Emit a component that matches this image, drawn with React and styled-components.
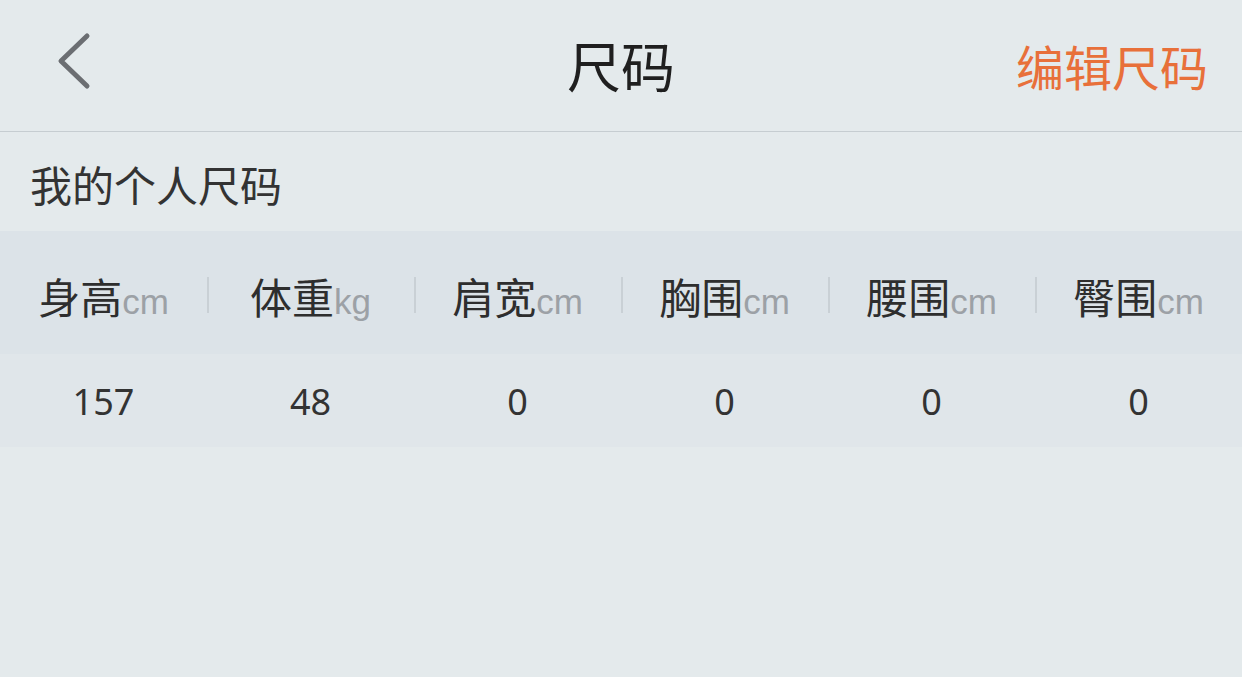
import React from "react";
import styled, { createGlobalStyle } from "styled-components";

const GlobalStyle = createGlobalStyle`
  html, body {
    margin: 0;
    padding: 0;
    background: #e4eaec;
    font-family: "Noto Sans CJK SC", "Noto Sans", sans-serif;
  }
`;

const sizes = [
  { name: "身高", unit: "cm", value: "157" },
  { name: "体重", unit: "kg", value: "48" },
  { name: "肩宽", unit: "cm", value: "0" },
  { name: "胸围", unit: "cm", value: "0" },
  { name: "腰围", unit: "cm", value: "0" },
  { name: "臀围", unit: "cm", value: "0" },
];

const BackIcon = () => (
  <svg width="40" height="64" viewBox="0 0 40 64">
    <polyline
      points="30,5 4,30 30,55"
      fill="none"
      stroke="#6b6e72"
      strokeWidth="5"
      strokeLinecap="round"
      strokeLinejoin="round"
    />
  </svg>
);

const App = () => {
  return (
    <Page>
      <GlobalStyle />
      <NavBar>
        <BackButton>
          <BackIcon />
        </BackButton>
        <Title>尺码</Title>
        <EditLink>编辑尺码</EditLink>
      </NavBar>
      <SectionTitle>我的个人尺码</SectionTitle>
      <Table>
        <HeadRow>
          {sizes.map((s, i) => (
            <HeadCell key={s.name} divider={i > 0}>
              <Label>{s.name}</Label>
              <Unit>{s.unit}</Unit>
            </HeadCell>
          ))}
        </HeadRow>
        <ValueRow>
          {sizes.map((s) => (
            <ValueCell key={s.name}>{s.value}</ValueCell>
          ))}
        </ValueRow>
      </Table>
    </Page>
  );
};

export default App;

const Page = styled.div`
  width: 1242px;
  height: 677px;
  background: #e4eaec;
  overflow: hidden;
`;

const NavBar = styled.div`
  height: 131px;
  border-bottom: 1px solid #c6cdd1;
  display: grid;
  grid-template-columns: 1fr auto 1fr;
  align-items: center;
  padding: 0 34px;
`;

const BackButton = styled.div`
  display: flex;
  align-items: center;
  margin-top: -6px;
  padding-left: 23px;
`;

const Title = styled.div`
  font-size: 54px;
  color: #1f1f1f;
  line-height: 1;
  margin-top: -2px;
`;

const EditLink = styled.div`
  justify-self: end;
  font-size: 48px;
  color: #e8703a;
  line-height: 1;
  margin-top: -2px;
`;

const SectionTitle = styled.div`
  height: 99px;
  display: flex;
  align-items: center;
  padding-left: 30px;
  font-size: 42px;
  color: #333;
  padding-top: 4px;
  box-sizing: border-box;
`;

const Table = styled.div`
  display: flex;
  flex-direction: column;
`;

const HeadRow = styled.div`
  height: 123px;
  background: #dce3e8;
  display: grid;
  grid-template-columns: repeat(6, 1fr);
`;

const HeadCell = styled.div`
  position: relative;
  display: flex;
  align-items: baseline;
  justify-content: center;
  padding-top: 38px;
  box-sizing: border-box;
  &::before {
    content: "";
    display: ${(p) => (p.divider ? "block" : "none")};
    position: absolute;
    left: 0;
    top: 46px;
    height: 36px;
    width: 2px;
    background: #c9d0d5;
  }
`;

const Label = styled.span`
  font-size: 42px;
  color: #2e2e2e;
  line-height: 1.3;
`;

const Unit = styled.span`
  font-size: 35px;
  color: #9ca1a6;
  font-family: "Liberation Sans", "Noto Sans", sans-serif;
`;

const ValueRow = styled.div`
  height: 93px;
  background: #e0e6ea;
  display: grid;
  grid-template-columns: repeat(6, 1fr);
  align-items: center;
`;

const ValueCell = styled.div`
  text-align: center;
  font-size: 36px;
  color: #333;
  font-family: "Noto Sans", "Open Sans", sans-serif;
  margin-top: 2px;
`;
